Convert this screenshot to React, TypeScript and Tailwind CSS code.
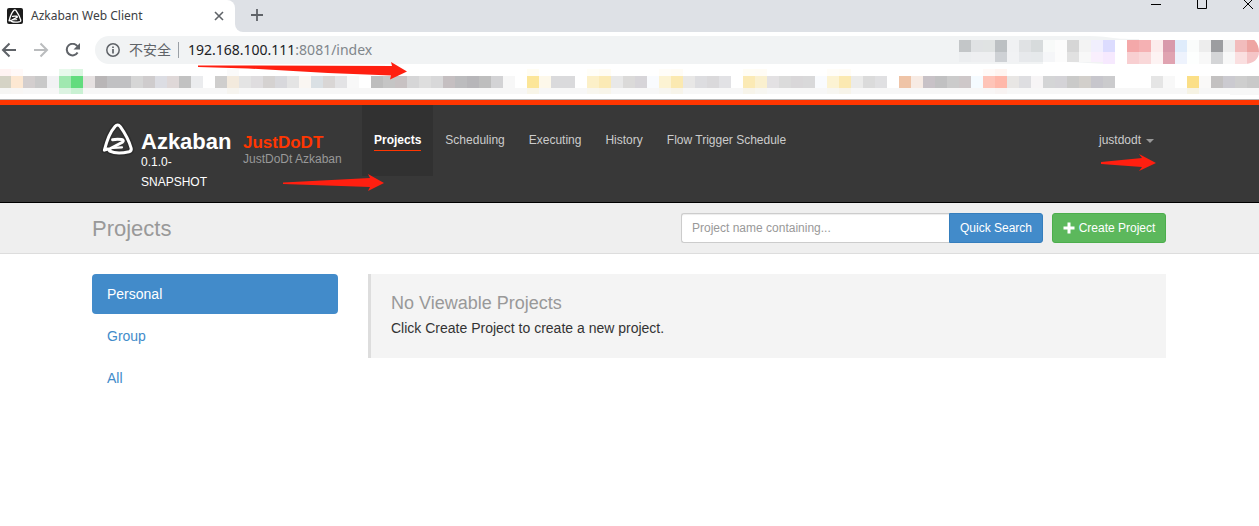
import React from "react";

const CELL = 12;

const BOOKMARK_COLORS = (
  "d5d3c5 fde8d2 d3cece c9c9c9 f2f2f4 a0e8b0 62dc7e e6e1e1 b9b6b7 c1c1c3 c1c1c3 d6d6d6 cfcccd dcdde3 dfd8d8 c2c2c2 ebecee ffffff " +
  "cfcecd f3eadd e4e4e4 dfdddf d5d2d1 d8d8dc e4e4e4 faf6f2 dae0e4 d9d6d5 e3e3e5 f8f8f8 ffffff bdbdbd c5c5c5 c8c2c3 d6d6d7 dedede " +
  "d8d8d9 c5bfc1 bcbcbe b7b6b9 bebebe d3d3d5 f7f7f7 ffffff fce698 fdf8ea dadadc dadadc ffffff fcf0c8 fbeab5 e8e8e8 dbdad9 d7d5d9 " +
  "f9fbfe fcf3d3 fbe9b1 e8e7e6 dddde0 dad9db e2e2e5 ffffff fbeab5 faf0cf e3e1e3 dbdbdb d9d7d9 d9d9da f9fbfe fcf3d3 fbe9b1 ebebea " +
  "dbdbdb e0e0e2 ffffff efc4a7 f7ebe4 c8c2c7 c1c1c2 cbcbcb cec8c9 f5fbff fec4b8 ffb8aa e8e6e4 dedee1 f7f5f6 d4d5d6 d4d3d7 cacac9 " +
  "d2cfcb c7c6cc cbcbcd ffffff ffffff ffffff e5e5e5 f8f8f8 ffffff fbdf87 faf9f8 c3c1c1 cbcad0 cecece c9c9c9"
).split(" ");

const BOOKMARK_GLOWS: [number, string, string][] = [
  [0, "fff3f2", "f6f6f4"],
  [1, "fff9f8", "f8f6f4"],
  [5, "e8f9ec", "dcf3e2"],
  [6, "dbf6e1", "c9f1d3"],
  [19, "fafafa", "f6f4ef"],
  [44, "fffdf3", "f8f5e8"],
  [49, "fffef8", "f8f6ee"],
  [50, "fffcf3", "f8f5ea"],
  [55, "fffdf8", "f7f6f1"],
  [56, "fffcf5", "f7f4ea"],
  [62, "fffdf5", "f7f4ea"],
  [63, "fffcf5", "f7f6f1"],
  [69, "fffdf8", "f7f6f1"],
  [70, "fffcf5", "f7f4ea"],
  [82, "fffaf8", "f8f6f6"],
  [83, "fff5f1", "f8f3f2"],
  [99, "ffffff", "f6f3e4"],
];

const TOOLBAR_ROWS = [
  "c3c6c8 e0e2e4 e0e3e3 bcc0c3 f0f1f3 e0e2e4 d7dbdc f8faf9 fcfcfc d6d6d6 f3f3f3 f1effd dcdcfe ffffff f4a8a9 f5b1b3 fcecec d899ab dfecfb fafcfb ededed 9c9da0 ededed f2bcbc eea5a2",
  "eceef0 eeeff1 eeeff1 ced1d5 f1f2f4 e7e9ec e6e9eb f5f6f8 fcfcfc e1e1e1 f8f8f8 f9effd f6e9fe ffffff f8cfd1 f9d8d9 fdf3f3 e0a3b1 eef3fd fdfffe f8f8f8 d4d5d7 f8f8f8 fadfe0 f5c5c7",
].map((row) => row.split(" "));

function BookmarkMosaic() {
  return (
    <svg width="1259" height="26" viewBox="0 0 1259 26" className="block" shapeRendering="crispEdges" aria-hidden="true">
      <path d="M0 19H1259V26L1200 25L1100 25H4L0 23Z" fill="#f7f7f7" />
      {BOOKMARK_GLOWS.map(([i, top, bottom]) => (
        <g key={i}>
          <rect x={i * CELL - 1} y="0" width={CELL} height="7" fill={`#${top}`} />
          <rect x={i * CELL - 1} y="19" width={CELL} height="6" fill={`#${bottom}`} />
        </g>
      ))}
      {BOOKMARK_COLORS.map((c, i) => (
        <rect key={i} x={i * CELL - 1} y="7" width={CELL} height={CELL} fill={`#${c}`} />
      ))}
    </svg>
  );
}

function ToolbarMosaic() {
  return (
    <svg width="300" height="28" viewBox="0 0 300 28" className="block shrink-0" aria-hidden="true">
      <defs>
        <clipPath id="pill-end">
          <path d="M0 0H286C294 0 300 7 300 16C300 23 294 28 286 28H0Z" />
        </clipPath>
      </defs>
      <path d="M130 0H300V28H84V26C100 24 130 28 160 28V3C150 1 140 0 130 0Z" fill="#fff" />
      <path d="M80 0H110C150 1 150 3 180 3V5H80Z" fill="#f1f3f4" />
      <g clipPath="url(#pill-end)" shapeRendering="crispEdges">
        {TOOLBAR_ROWS.map((row, r) =>
          row.map((c, i) => (
            <rect
              key={`${r}-${i}`}
              x={i * CELL}
              y={4 + r * CELL}
              width={CELL}
              height={r === 1 && i < 12 ? 10 : CELL}
              fill={`#${c}`}
            />
          )),
        )}
      </g>
    </svg>
  );
}

function AzkabanMark({ size }: { size: number }) {
  return (
    <svg width={size} height={size} viewBox="0 0 32 32" fill="none" strokeLinecap="round" strokeLinejoin="round" className="overflow-visible" aria-hidden="true">
      <path d="M2.400 27.200C4.500 18.500 8.500 8.500 13 3.400C14.800 1.400 16.600 1.500 18.300 3.600C22.500 9.500 27 17.500 29.200 25.300C29.600 27.200 28.800 28.300 27 28.800C20 30.400 12 30.200 7.800 28.200" stroke="#222" strokeOpacity=".45" strokeWidth="6" />
      <g stroke="#fff">
        <path d="M6 26L2.400 27.200C4.500 18.500 8.500 8.500 13 3.400C14.800 1.400 16.600 1.500 18.300 3.600C22.500 9.500 27 17.500 29.200 25.300C29.600 27.200 28.800 28.300 27 28.800C20 30.400 12 30.200 7.800 28.200C6.700 27.500 7 26.400 8 25.800L20.400 19.200C21.800 17.900 21.500 16.900 19.800 16.600C16.500 16.200 13.500 16.200 10.600 16.800" strokeWidth="3" />
        <path d="M11 24.800L20 24.300" strokeWidth="2.200" />
      </g>
    </svg>
  );
}

function BrowserChrome() {
  return (
    <div className="bg-white">
      <div className="flex h-8 bg-[#dee1e6]">
        <div className="flex w-[235px] shrink-0 items-center rounded-tr-lg bg-white pl-[7px] pr-[11px]">
          <span className="flex size-4 items-center justify-center rounded-xs bg-[#1c1c1c]">
            <AzkabanMark size={14} />
          </span>
          <span className="ml-2 grow font-['Noto_Sans','Noto_Sans_CJK_SC',sans-serif] text-[12px] leading-4 text-[#3c4043]">
            Azkaban Web Client
          </span>
          <button aria-label="Close tab" className="text-[#5f6368]">
            <svg width="10" height="10" viewBox="0 0 10 10" stroke="currentColor" strokeWidth="1.600">
              <path d="M1 1L9 9M9 1L1 9" />
            </svg>
          </button>
        </div>
        <div className="flex w-2 shrink-0 bg-white">
          <div className="grow rounded-bl-lg bg-[#dee1e6]" />
        </div>
        <button aria-label="New tab" className="ml-2 -mt-0.5 self-center text-[#5f6368]">
          <svg width="12" height="12" viewBox="0 0 12 12" stroke="currentColor" strokeWidth="1.800">
            <path d="M6 0V12M0 6H12" />
          </svg>
        </button>
        <div className="ml-auto flex items-start gap-9 pr-1.5">
          <button aria-label="Minimize" className="pt-1">
            <svg width="10" height="1" viewBox="0 0 10 1" className="block"><path d="M0 .5H10" stroke="#000" /></svg>
          </button>
          <button aria-label="Maximize">
            <svg width="10" height="9" viewBox="0 0 10 9" className="block"><path d="M.5 0V8.500H9.500V0" fill="none" stroke="#000" /></svg>
          </button>
          <button aria-label="Close window">
            <svg width="10" height="9" viewBox="0 0 10 9" className="block"><path d="M0 -1L10 9M10 -1L0 9" stroke="#000" /></svg>
          </button>
        </div>
      </div>

      <div className="flex h-9 items-center">
        <div className="flex w-[95px] shrink-0 items-center gap-4 pl-[1px]">
          <button aria-label="Back" className="text-[#5f6368]">
            <svg width="16" height="16" viewBox="0 0 16 16" fill="none" stroke="currentColor" strokeWidth="2"><path d="M15 8H2.500M8.500 1.500L2 8L8.500 14.500" /></svg>
          </button>
          <button aria-label="Forward" className="text-[#babcbe]">
            <svg width="16" height="16" viewBox="0 0 16 16" fill="none" stroke="currentColor" strokeWidth="2"><path d="M1 8H13.500M7.500 1.500L14 8L7.500 14.500" /></svg>
          </button>
          <button aria-label="Reload" className="text-[#5f6368]">
            <svg width="15" height="14" viewBox="0 0 15 14" className="block">
              <path d="M12.600 9.500A5.800 5.800 0 1 1 12.300 3.200" fill="none" stroke="currentColor" strokeWidth="2" />
              <path d="M15 0V6.500H8.500Z" fill="currentColor" />
            </svg>
          </button>
        </div>
        <div className="flex h-7 grow items-center rounded-l-full bg-[#f1f3f4] pl-[11px] font-['Noto_Sans','Noto_Sans_CJK_SC',sans-serif] text-[14px] leading-5">
          <svg width="14" height="14" viewBox="0 0 14 14" fill="none" stroke="#5f6368" aria-hidden="true">
            <circle cx="7" cy="7" r="6.200" strokeWidth="1.500" />
            <path d="M7 6V10.500M7 3.500V5" strokeWidth="1.700" />
          </svg>
          <span className="ml-[9px] text-[#5f6368]">不安全</span>
          <span className="ml-[7px] h-4 w-px bg-[#9aa0a6]" />
          <span className="ml-[9px] grow text-[#202124]">
            192.168.100.111<span className="text-[#80868b]">:8081/index</span>
          </span>
          <ToolbarMosaic />
        </div>
      </div>
      <div className="overflow-hidden border-b border-[#b6b6b6] pt-px pb-1">
        <BookmarkMosaic />
      </div>
    </div>
  );
}

const NAV = ["Projects", "Scheduling", "Executing", "History", "Flow Trigger Schedule"];

function Header() {
  return (
    <header className="flex h-[103px] items-start border-t-5 border-b border-t-[#ff3601] border-b-black bg-[#383838] pr-[93px] pl-[102px] text-[12px]">
      <a href="#" aria-label="Azkaban home" className="mt-[18px] shrink-0">
        <AzkabanMark size={32} />
      </a>
      <div className="mt-[26px] ml-[7px] w-[102px] shrink-0 text-white">
        <div className="text-[22px] leading-[22px] font-bold">Azkaban</div>
        <div className="-mt-px w-20 leading-5">0.1.0-SNAPSHOT</div>
      </div>
      <div className="mt-7 w-[119px] shrink-0 whitespace-nowrap">
        <div className="text-[17px] leading-5 font-bold text-[#ff3601]">JustDoDT</div>
        <div className="-mt-px leading-[14px] text-[#999]">JustDoDt Azkaban</div>
      </div>
      <nav className="flex">
        {NAV.map((item, i) => (
          <a
            key={item}
            href="#"
            className={
              i === 0
                ? "block h-[71px] bg-[#313131] px-3 pt-[25px] font-bold text-white"
                : "block h-[71px] px-3 pt-[25px] text-[#ccc]"
            }
          >
            <span className={i === 0 ? "block border-b border-[#ff3601] leading-5" : "block leading-5"}>{item}</span>
          </a>
        ))}
      </nav>
      <button className="mt-[25px] ml-auto flex items-center gap-[5px] pr-3 leading-5 text-[#ccc]">
        justdodt
        <svg width="8" height="4" viewBox="0 0 8 4" className="mt-0.5" aria-hidden="true"><path d="M0 0H8L4 4Z" fill="#999" /></svg>
      </button>
    </header>
  );
}

function RedArrow({ className, width, points }: { className: string; width: number; points: string }) {
  return (
    <svg width={width} height="20" viewBox={`0 0 ${width} 20`} className={className} aria-hidden="true">
      <polygon points={points} fill="#ff1f10" />
    </svg>
  );
}

export default function App() {
  return (
    <div className="relative min-h-screen overflow-hidden bg-white font-['Liberation_Sans',Arial,sans-serif] text-[14px] text-[#333]">
      <BrowserChrome />
      <Header />

      <section className="flex h-[51px] items-center border-b border-[#ddd] bg-[#efefef] pr-[93px] pl-[92px]">
        <h1 className="pt-0.5 text-[22px] leading-6 text-[#999]">Projects</h1>
        <form className="ml-auto flex text-[12px]" onSubmit={(e) => e.preventDefault()}>
          <input
            type="text"
            aria-label="Project name"
            placeholder="Project name containing..."
            className="h-[30px] w-[268px] rounded-l-[3px] border border-r-0 border-[#ccc] bg-white px-2.5 shadow-[inset_0_1px_1px_rgba(0,0,0,0.075)] outline-none placeholder:text-[#999]"
          />
          <button type="submit" className="h-[30px] w-[94px] rounded-r-[3px] border border-[#357ebd] bg-[#428bca] whitespace-nowrap text-white">
            Quick Search
          </button>
          <button
            type="button"
            className="ml-[9px] flex h-[30px] w-[114px] items-center justify-center gap-1 rounded-[3px] border border-[#4cae4c] bg-[#5cb85c] whitespace-nowrap text-white"
          >
            <svg width="12" height="12" viewBox="0 0 12 12" aria-hidden="true"><path d="M4.500 0.500H7.500V4.500H11.500V7.500H7.500V11.500H4.500V7.500H0.500V4.500H4.500Z" fill="#fff" /></svg>
            Create Project
          </button>
        </form>
      </section>

      <main className="flex items-start gap-[30px] pt-5 pr-[93px] pl-[92px] leading-5">
        <nav className="flex w-[246px] shrink-0 flex-col gap-0.5 text-[#428bca]">
          <a href="#" className="rounded-sm bg-[#428bca] px-[15px] py-2.5 text-white">Personal</a>
          <a href="#" className="rounded-sm px-[15px] py-2.5">Group</a>
          <a href="#" className="rounded-sm px-[15px] py-2.5">All</a>
        </nav>
        <div className="h-[84px] grow border-l-3 border-[#ddd] bg-[#f4f4f4] px-5 pt-[19px]">
          <h4 className="text-[18px] leading-5 text-[#999]">No Viewable Projects</h4>
          <p className="mt-[5px]">Click Create Project to create a new project.</p>
        </div>
      </main>

      <RedArrow className="absolute top-[61px] left-[198px]" width={210} points="0,4.500 50,4.500 194,5 193,1 209,10.500 192,18.500 193,14.500 130,12 50,7.500 0,6" />
      <RedArrow className="absolute top-[173px] left-[283px]" width={102} points="0,9.500 87,5 85,1 101,10 85,18 87,14 0,11" />
      <RedArrow className="absolute top-[153px] left-[1101px]" width={56} points="0,9 41,5 38,1 55,10 38,18 41,14 0,11" />
    </div>
  );
}
